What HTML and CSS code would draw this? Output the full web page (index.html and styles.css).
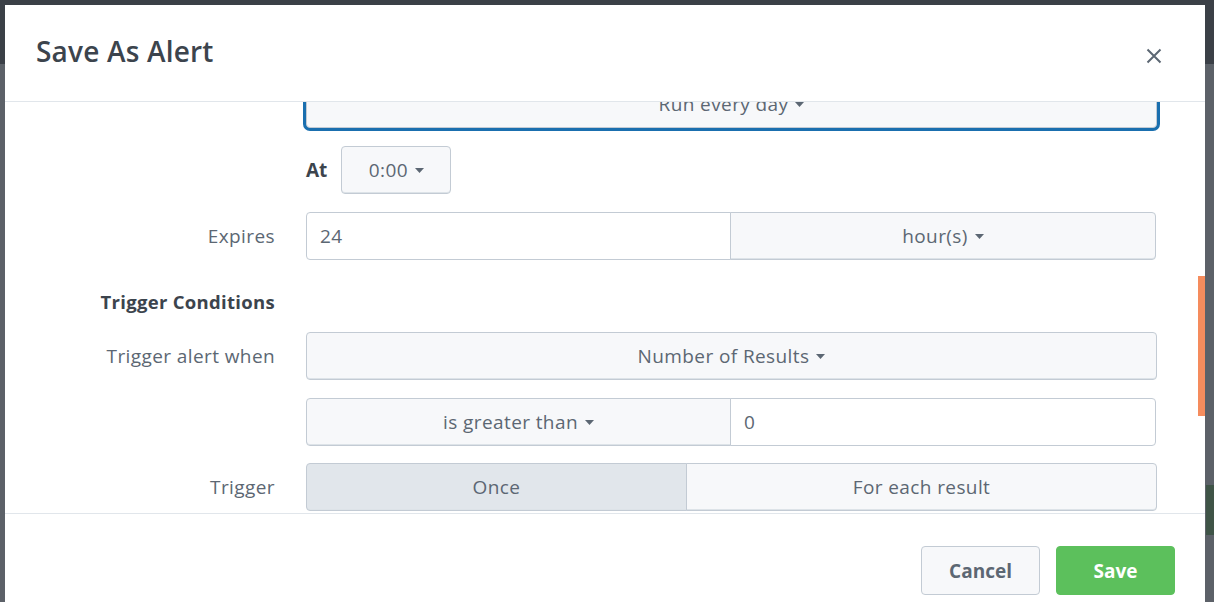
FILE: index.html
```html
<!DOCTYPE html>
<html lang="en">
<head>
<meta charset="utf-8">
<title>Save As Alert</title>
<link rel="stylesheet" href="styles.css">
</head>
<body>
<div class="page">
  <div class="modal">
    <div class="modal-header">
      <h2 class="modal-title">Save As Alert</h2>
      <button class="close" aria-label="Close">
        <svg width="16" height="16" viewBox="0 0 16 16"><path d="M1.5 1.5 L14.5 14.5 M14.5 1.5 L1.5 14.5" stroke="#5c6773" stroke-width="2" fill="none"/></svg>
      </button>
    </div>
    <div class="modal-body">
      <div class="form">
        <div class="row row-first">
          <div class="label"></div>
          <div class="control">
            <div class="select focused">Run every day <svg class="caret" width="9" height="5" viewBox="0 0 9 5"><path d="M0 0 H9 L4.5 5 Z" fill="#5c6773"/></svg></div>
          </div>
        </div>
        <div class="row">
          <div class="label"></div>
          <div class="control at-row">
            <span class="at">At</span>
            <div class="select time">0:00 <svg class="caret" width="9" height="5" viewBox="0 0 9 5"><path d="M0 0 H9 L4.5 5 Z" fill="#5c6773"/></svg></div>
          </div>
        </div>
        <div class="row">
          <div class="label">Expires</div>
          <div class="control group">
            <div class="input half">24</div>
            <div class="select half join-left">hour(s) <svg class="caret" width="9" height="5" viewBox="0 0 9 5"><path d="M0 0 H9 L4.5 5 Z" fill="#5c6773"/></svg></div>
          </div>
        </div>
        <div class="row heading-row">
          <div class="label heading">Trigger Conditions</div>
        </div>
        <div class="row">
          <div class="label">Trigger alert when</div>
          <div class="control">
            <div class="select">Number of Results <svg class="caret" width="9" height="5" viewBox="0 0 9 5"><path d="M0 0 H9 L4.5 5 Z" fill="#5c6773"/></svg></div>
          </div>
        </div>
        <div class="row">
          <div class="label"></div>
          <div class="control group">
            <div class="select half">is greater than <svg class="caret" width="9" height="5" viewBox="0 0 9 5"><path d="M0 0 H9 L4.5 5 Z" fill="#5c6773"/></svg></div>
            <div class="input half join-left">0</div>
          </div>
        </div>
        <div class="row row-last">
          <div class="label">Trigger</div>
          <div class="control group">
            <div class="select once active">Once</div>
            <div class="select each join-left">For each result</div>
          </div>
        </div>
      </div>
      <div class="scroll-thumb"></div>
    </div>
    <div class="modal-footer">
      <button class="btn">Cancel</button>
      <button class="btn primary">Save</button>
    </div>
  </div>
  <div class="edge-block"></div>
</div>
</body>
</html>
```

FILE: styles.css
```css
html, body {
  margin: 0;
  padding: 0;
  height: 602px;
  overflow: hidden;
}
body {
  background: linear-gradient(#3b4047 0, #3b4047 64px, #5c6168 64px, #5c6168 100%);
  font-family: "Open Sans", "Liberation Sans", sans-serif;
  color: #5c6773;
}
.page {
  position: relative;
  height: 602px;
}
.modal {
  position: relative;
  margin: 5px 0 0 5px;
  width: 1200px;
  background: #fff;
}
.modal-header {
  height: 96px;
  border-bottom: 1px solid #e1e6eb;
  display: flex;
  align-items: center;
  justify-content: space-between;
  padding: 0 43px 0 31px;
}
.modal-title {
  margin: 0;
  font-size: 28px;
  font-weight: 600;
  color: #3c444d;
  letter-spacing: 0.2px;
  line-height: 1;
  padding-bottom: 4px;
}
.close {
  border: 0;
  background: none;
  padding: 0;
  width: 16px;
  height: 16px;
  margin-top: 5px;
  display: flex;
}
.modal-body {
  position: relative;
  height: 411px;
  overflow: hidden;
}
.form {
  display: flex;
  flex-direction: column;
}
.row {
  display: flex;
  align-items: center;
  margin-top: 18px;
}
.row-first { margin-top: -22px; }
.heading-row { margin-top: 29px; height: 24px; }
.heading-row + .row { margin-top: 19px; }
.row-last { margin-top: 17px; }
.label {
  width: 270px;
  margin-right: 31px;
  text-align: right;
  font-size: 19px;
  letter-spacing: 0.4px;
  color: #5c6773;
  flex: none;
  white-space: nowrap;
}
.label.heading {
  font-weight: 700;
  color: #3c444d;
  font-size: 18.5px;
  letter-spacing: 0.3px;
}
.control {
  width: 851px;
  display: flex;
  align-items: center;
}
.select, .input {
  height: 48px;
  box-sizing: border-box;
  border: 1px solid #c3cbd4;
  border-radius: 4px;
  background: #f7f8fa;
  display: flex;
  align-items: center;
  justify-content: center;
  font-size: 19px;
  letter-spacing: 0.4px;
  color: #5c6773;
  flex: 1;
  box-shadow: inset 0 -1px 0 #dde3e8;
  white-space: nowrap;
}
.caret { margin-left: 7px; flex: none; }
.select.focused {
  box-shadow: 0 0 0 3px #1a6faf;
}
.at-row { gap: 14px; }
.at {
  font-weight: 700;
  color: #3c444d;
  font-size: 19px;
}
.select.time {
  flex: none;
  width: 110px;
}
.input {
  background: #fff;
  justify-content: flex-start;
  padding-left: 13px;
  box-shadow: none;
}
.group .half { flex: none; width: 425px; }
.group .half.join-left { width: 426px; }
.group > :first-child { border-top-right-radius: 0; border-bottom-right-radius: 0; }
.group > .join-left { border-top-left-radius: 0; border-bottom-left-radius: 0; border-left: 1px solid #c3cbd4; margin-left: -1px; }
.select.once { flex: none; width: 381px; }
.select.each { flex: none; width: 471px; }
.select.active { background: #e1e6eb; }
.scroll-thumb {
  position: absolute;
  right: 0;
  top: 174px;
  width: 7px;
  height: 140px;
  background: #f58c5d;
}
.modal-footer {
  border-top: 1px solid #e1e6eb;
  display: flex;
  justify-content: flex-end;
  gap: 16px;
  padding: 32px 30px 20px 0;
}
.btn {
  width: 119px;
  height: 49px;
  border: 1px solid #c3cbd4;
  border-radius: 4px;
  background: #f7f8fa;
  font-family: "Open Sans", "Liberation Sans", sans-serif;
  font-size: 19px;
  font-weight: 700;
  color: #5c6773;
  padding: 0;
}
.btn.primary {
  background: #5cc05c;
  border-color: #5cc05c;
  color: #fff;
}
.edge-block {
  position: absolute;
  left: 1206px;
  top: 480px;
  width: 8px;
  height: 50px;
  background: #3f5447;
}
```
